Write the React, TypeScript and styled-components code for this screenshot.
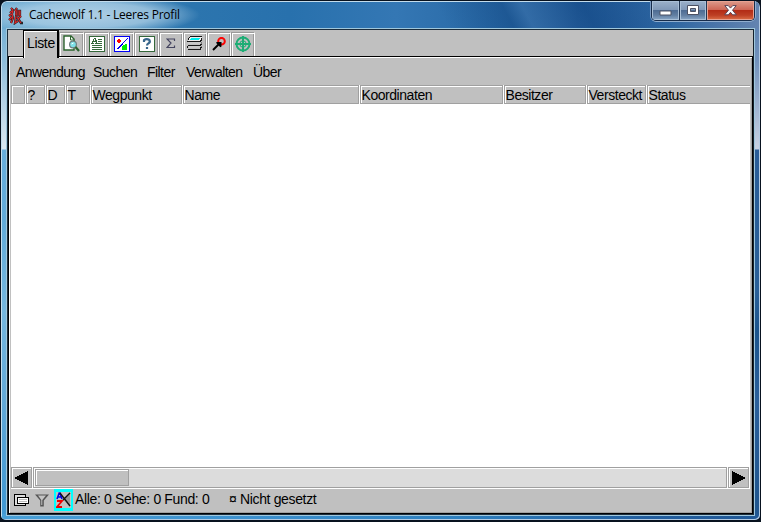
import React from 'react';
import styled, { createGlobalStyle } from 'styled-components';

const Global = createGlobalStyle`
  * { box-sizing: border-box; }
  html, body { margin: 0; padding: 0; overflow: hidden; background: #0a1420; }
`;

const Window = styled.div`
  width: 761px;
  height: 522px;
  display: grid;
  grid-template-rows: 28px 486px 5px;
  border: 1px solid #08121f;
  border-bottom-width: 2px;
  border-radius: 7px 7px 6px 6px;
  font-family: 'Liberation Sans', Arial, sans-serif;
  font-size: 14px;
  color: #000;
  overflow: hidden;
  box-shadow: inset 1px 1px 0 #c3dcec, inset -1px -1px 0 #b4cbe3;
  background:
    linear-gradient(90deg, #48a0d8, #3e92cf 30%, #2e80bf 60%, #235f9f 85%, #205896) 0 100% / 100% 6px no-repeat,
    linear-gradient(180deg, #64a5cf 0, #8dbddb 60px, #b4d2e6 100px, #dce9f2 148px, #68aedc 149px, #62abd9 220px, #75b7df 310px, #62a9d8 400px, #4299d3 500px) 0 0 / 8px 100% no-repeat,
    linear-gradient(180deg, #5179aa 0, #7292bc 60px, #c8d1e2 148px, #295d99 149px, #2a6099 290px, #1b548d 330px, #2b609b 400px, #20568f 500px) 100% 0 / 8px 100% no-repeat;
`;

const TitleBar = styled.header`
  display: flex;
  margin: 1px 1px 0;
  padding-left: 6px;
  border-radius: 5px 5px 0 0;
  background:
    radial-gradient(ellipse 112px 20px at 86px 13px, rgba(190,216,234,.85) 0, rgba(174,207,229,.75) 60%, rgba(130,180,214,0) 100%),
    linear-gradient(62deg, transparent 0 58%, rgba(17,68,127,.4) 66.5%, rgba(65,118,174,.5) 69%, rgba(17,66,126,.35) 77%, transparent 86%),
    linear-gradient(90deg, #6eacd2 0, #569dca 10%, #2c75ae 25%, #2871ad 38%, #3477b4 52%, #2868a5 65%, #1d5795 76%, #2d65a1 88%, #6484b0 100%);
`;

const Title = styled.span`
  font: 12px/26px 'Open Sans', 'Noto Sans', sans-serif;
  letter-spacing: -0.23px;
  margin-left: 5px;
  white-space: pre;
  flex: 1;
`;

const WinButtons = styled.div`
  display: flex;
  width: 104px;
  height: 20px;
  margin-right: 4px;
  margin-top: -1px;
  border: 1px solid #172c4b;
  border-top: 0;
  border-radius: 0 0 5px 5px;
  overflow: hidden;
  box-shadow: 0 1px 0 #91aecf, -1px 0 0 #7b9bc2, 1px 0 0 #91aecf;
`;

const WinButton = styled.div<{ $w: number; $close?: boolean; $low?: boolean }>`
  width: ${p => p.$w}px;
  display: grid;
  place-items: center;
  padding-top: ${p => (p.$low ? 5 : 0)}px;
  border-right: ${p => (p.$close ? 0 : '1px solid #203552')};
  background: ${p => p.$close
    ? 'linear-gradient(#dc9b8c, #ce6857 45%, #b32c16 50%, #bd3f24 75%, #dc7048)'
    : 'linear-gradient(#9bb1ca, #8199b8 45%, #4e6c93 50%, #627fa2 75%, #8ba8c7)'};
  box-shadow: inset 0 0 0 1px ${p => (p.$close ? '#e7a393' : '#a9bfd6')};
`;

const Client = styled.main`
  width: 747px;
  height: 486px;
  margin: 0 0 0 6px;
  display: grid;
  grid-template-rows: 26px 458px;
  border: 1px solid #1b2c3b;
  border-right-color: #14202b;
  background: #c0c0c0;
  box-shadow: 0 0 0 1px #9fc7dc;
`;

const TabStrip = styled.nav`
  display: flex;
  align-items: flex-end;
  padding-left: 15px;
  height: 26px;
`;

const ActiveTab = styled.div`
  position: relative;
  width: 36px;
  height: 28px;
  margin-bottom: -2px;
  border: 1px solid #000;
  border-right-width: 2px;
  border-bottom: 0;
  background: #c0c0c0;
  box-shadow: inset 1px 1px 0 #fff;
  padding-left: 3px;
  line-height: 24px;
  letter-spacing: -0.35px;
  z-index: 1;
`;

const Tab = styled.div<{ $w: number }>`
  width: ${p => p.$w}px;
  height: 24px;
  display: grid;
  place-items: center;
  padding-bottom: 2px;
  border-left: 1px solid #9a9a9a;
  border-top: 1px solid #9a9a9a;
  border-right: 1px solid #fff;
  box-shadow: inset 1px 1px 0 #fff, inset -1px 0 0 #9a9a9a;
  svg { display: block; }
`;

const Panel = styled.section`
  border: 1px solid #000;
  box-shadow: inset 1px 1px 0 #fff, inset -1px -1px 0 #a0a0a0;
  padding: 1px 2px 1px 2px;
  display: grid;
  grid-template-columns: 739px;
  grid-template-rows: 27px 19px 363px 21px 1fr;
`;

const MenuBar = styled.div`
  display: flex;
  padding-left: 5px;
`;

const MenuItem = styled.span<{ $w: number }>`
  width: ${p => p.$w}px;
  line-height: 29px;
  font-size: 14px;
  letter-spacing: -0.55px;
  white-space: nowrap;
`;

const HeaderRow = styled.div`
  display: flex;
  background: #fff;
  overflow: hidden;
`;

const HeaderCell = styled.div<{ $w: number }>`
  width: ${p => p.$w - 1}px;
  margin-right: 1px;
  flex: none;
  border: 1px solid #a0a0a0;
  background: #c0c0c0;
  box-shadow: inset 1px 1px 0 #fff;
  padding-left: 0.5px;
  line-height: 19px;
  font-size: 14px;
  letter-spacing: -0.45px;
  white-space: nowrap;
`;

const TableBody = styled.div`
  background: #fff;
`;

const ScrollBar = styled.div`
  display: grid;
  grid-template-columns: 21px 1fr 21px;
  gap: 1px;
  padding-right: 1px;
  background: #fff;
`;

const Arrow = styled.div`
  border: 1px solid #a0a0a0;
  background: #c0c0c0;
  box-shadow: inset 1px 1px 0 #fff;
  display: grid;
  place-items: center;
`;

const Track = styled.div`
  border: 1px solid #a0a0a0;
  background: #dcdcdc;
  box-shadow: inset 1px 1px 0 #fff;
  padding: 1px;
`;

const Thumb = styled.div`
  width: 94px;
  height: 17px;
  border: 1px solid #a0a0a0;
  background: #c0c0c0;
  box-shadow: inset 1px 1px 0 #fff;
`;

const StatusBar = styled.footer`
  display: flex;
  align-items: flex-start;
  padding: 0 0 0 3px;
  border-top: 1px solid #fff;
  font-size: 14px;
  letter-spacing: -0.35px;
  line-height: 21px;
  white-space: pre;
`;

const IconSlot = styled.span<{ $w: number; $cyan?: boolean }>`
  width: ${p => p.$w}px;
  height: 22px;
  display: grid;
  place-items: center;
  background: ${p => (p.$cyan ? '#00ffff' : 'transparent')};
`;

const StatusText = styled.span<{ $w: number }>`
  width: ${p => p.$w}px;
  margin-left: 2px;
`;

const WolfIcon = () => (
  <svg width="16" height="18" viewBox="0 0 16 18" style={{ marginTop: 5 }} fill="none">
    <path d="M3 1l2 2-3 3M5 4l-1 3-3 2M4 7l1 4-2 5M4 10l-3 3M9 1l-2 3M8 4h4v4H8zM8 6h4M8 9l-1 7 3-2M9 10l4 6M13 9l-3 3M12 16h3" stroke="#24262b" strokeWidth="2.3" />
    <path d="M3 1l2 2-3 3M5 4l-1 3-3 2M4 7l1 4-2 5M4 10l-3 3M9 1l-2 3M8 4h4v4H8zM8 6h4M8 9l-1 7 3-2M9 10l4 6M13 9l-3 3" stroke="#e02828" strokeWidth="1.1" />
  </svg>
);

const DetailIcon = () => (
  <svg width="17" height="17" viewBox="0 0 17 17" fill="none">
    <path d="M1 1h7l3 3v11H1z" fill="#fff" stroke="#2d642f" strokeWidth="1.4" />
    <path d="M7.5 1v4h4" stroke="#2d642f" />
    <circle cx="10" cy="9.5" r="3.4" fill="#7de1e8" stroke="#6f7f80" strokeWidth="1.2" />
    <path d="M12.5 12l3.5 4" stroke="#2d6530" strokeWidth="2.2" />
    <path d="M8.5 9l2-1" stroke="#fff" />
  </svg>
);

const TextIcon = () => (
  <svg width="16" height="16" viewBox="0 0 16 16" shapeRendering="crispEdges" fill="none">
    <path d="M.5.5h15v15H.5z" fill="#fff" stroke="#34683a" />
    <path d="M9 3.5h4M9 5.5h4M9 7.5h4M3 9.5h10M3 11.5h10M3 13.5h10M2 7.5h3M6 7.5h3M3.5 5v2M7.5 4v3M4 4.5h1M5 2.5h2M4.5 3v2M6.5 3v3M4 5.5h3" stroke="#34683a" />
  </svg>
);

const PictureIcon = () => (
  <svg width="16" height="16" viewBox="0 0 16 16" shapeRendering="crispEdges">
    <path d="M.5.5h15v15H.5z" fill="#fff" stroke="#0000f4" />
    <path d="M3 4h1V3h2v1h1v2H6v1H4V6H3z" fill="#f00" />
    <path d="M3 12h1v-1h1v-1h1V9h1V8h1V7h1V6h1V5h1V4h1V3h1V2h1v1h-1v1h-1v1h-1v1h-1v1h-1v1H9v1H8v1H7v1H6v1H5v1H3z" fill="#0000f4" />
    <path d="M8 14v-4h1V9h2V8h2v6z" fill="#00ed00" />
  </svg>
);

const HelpIcon = () => (
  <svg width="16" height="16" viewBox="0 0 16 16" fill="none">
    <path d="M.5.5h15v15H.5z" fill="#fff" stroke="#34683a" shapeRendering="crispEdges" />
    <path d="M5 6V4.2Q7.6 2 10.4 4q1.2 2-.8 3.2Q8 8 8 9.6M8 11v2" stroke="#38668c" strokeWidth="2.2" />
  </svg>
);

const SigmaIcon = () => (
  <svg width="10" height="11" viewBox="0 0 10 11" fill="none">
    <path d="M8.5 3V1H1l4 4-4 4.5h7.5V7.5" stroke="#454560" strokeWidth="1.2" />
  </svg>
);

const PrintIcon = () => (
  <svg width="16" height="15" viewBox="0 0 16 15" shapeRendering="crispEdges">
    <path d="M3 1h12v1h-1v2h-1v1H1V3h1V2h1z" fill="#eee" />
    <path d="M4 2h9v1h-1v1H3V3h1z" fill="#00f0f0" />
    <path d="M3 0h12v1H3zM2 1h1v1H2zM1 2h1v2H1zM0 5h13V4h1V2h1v3h-1v1H0zM1 9h12V8h2v1h-1v1H1zM1 13h12v-2h2v1h-1v2H1zM0 10h1v2H0z" fill="#171717" />
    <path d="M1 6h12v2H1zM2 10h11v2H2z" fill="#c8c8c8" />
    <path d="M14 6h1v2h-1zM14 10h1v1h-1z" fill="#777" />
  </svg>
);

const GotoIcon = () => (
  <svg width="14" height="14" viewBox="0 0 14 14" fill="none">
    <circle cx="9.5" cy="4.2" r="3.3" stroke="#fb0505" strokeWidth="2" />
    <path d="M1 13l7-7" stroke="#000" strokeWidth="2" />
    <path d="M4.5 5h5v4.5l-1.2.8L4.2 6z" fill="#000" />
  </svg>
);

const RadarIcon = () => (
  <svg width="16" height="16" viewBox="0 0 16 16" fill="none" stroke="#1ead75">
    <circle cx="8" cy="8" r="6.5" strokeWidth="2" />
    <circle cx="8" cy="8" r="3.2" strokeWidth="1" />
    <path d="M8 0v16M0 8h16" strokeWidth="2" />
  </svg>
);

const tabs = [
  { w: 25, icon: <DetailIcon /> },
  { w: 25, icon: <TextIcon /> },
  { w: 25, icon: <PictureIcon /> },
  { w: 25, icon: <HelpIcon /> },
  { w: 24, icon: <SigmaIcon /> },
  { w: 24, icon: <PrintIcon /> },
  { w: 24, icon: <GotoIcon /> },
  { w: 24, icon: <RadarIcon /> },
];

const menus: [string, number][] = [['Anwendung', 77], ['Suchen', 54], ['Filter', 39], ['Verwalten', 67], ['Über', 40]];

const columns: [string, number][] = [
  ['', 15], ['?', 20], ['D', 20], ['T', 25], ['Wegpunkt', 92], ['Name', 177],
  ['Koordinaten', 144], ['Besitzer', 83], ['Versteckt', 60], ['Status', 106],
];

export default function App() {
  return (
    <>
      <Global />
      <Window>
        <TitleBar>
          <WolfIcon />
          <Title>Cachewolf 1.1 - Leeres Profil</Title>
          <WinButtons>
            <WinButton $w={29} $low>
              <svg width="13" height="6" viewBox="0 0 13 6"><path d="M1 1h11v4H1z" fill="#fff" stroke="#4c5264" /></svg>
            </WinButton>
            <WinButton $w={27}>
              <svg width="12" height="11" viewBox="0 0 12 11"><path d="M.5.5h11v9H.5zM3.5 3.5v3h5v-3z" fill="#fff" fillRule="evenodd" stroke="#4c5264" /></svg>
            </WinButton>
            <WinButton $w={48} $close>
              <svg width="13" height="11" viewBox="0 0 13 11"><path d="M.8.6h3.5l2.2 2.5L8.7.6h3.5L8.5 5.2l3.8 4.6H8.7L6.5 7.3 4.3 9.8H.7l3.8-4.6z" fill="#fff" stroke="#594557" /></svg>
            </WinButton>
          </WinButtons>
        </TitleBar>
        <Client>
          <TabStrip>
            <ActiveTab>Liste</ActiveTab>
            {tabs.map((t, i) => <Tab key={i} $w={t.w}>{t.icon}</Tab>)}
          </TabStrip>
          <Panel>
            <MenuBar>
              {menus.map(([label, w]) => <MenuItem key={label} $w={w}>{label}</MenuItem>)}
            </MenuBar>
            <HeaderRow>
              {columns.map(([label, w], i) => <HeaderCell key={i} $w={w}>{label}</HeaderCell>)}
            </HeaderRow>
            <TableBody />
            <ScrollBar>
              <Arrow><svg width="15" height="14" viewBox="0 0 15 14" shapeRendering="crispEdges"><path d="M0 7L14 0v14z" /></svg></Arrow>
              <Track><Thumb /></Track>
              <Arrow><svg width="15" height="14" viewBox="0 0 15 14" shapeRendering="crispEdges"><path d="M15 7L1 0v14z" /></svg></Arrow>
            </ScrollBar>
            <StatusBar>
              <IconSlot $w={15}>
                <svg width="15" height="13" viewBox="0 0 15 13" shapeRendering="crispEdges" fill="none">
                  <path d="M.5.5h11v11H.5z" fill="#ddd" stroke="#000" />
                  <path d="M3.5 3.5h11v6h-11z" fill="#fff" stroke="#000" />
                  <path d="M5 5.5h8M5 7.5h8" stroke="#bbb" />
                </svg>
              </IconSlot>
              <IconSlot $w={25}>
                <svg width="14" height="13" viewBox="0 0 14 13"><path d="M0 .5h14L8.8 6.5v6H5.2v-6z" fill="#555" /><path d="M3 1.5h8L7.3 6v5h-1V6z" fill="#c4c4c4" /></svg>
              </IconSlot>
              <IconSlot $w={19} $cyan>
                <svg width="15" height="16" viewBox="0 0 15 16" fill="none">
                  <path d="M0 0h15v16H0z" fill="#c0c0c0" />
                  <path d="M1 7l2.2-6H4l2 6M2 5h4" stroke="#0000e8" strokeWidth="1.6" />
                  <path d="M1 9h5l-5 6h5" stroke="#f00000" strokeWidth="1.8" />
                  <path d="M7 7l7-7v15z" fill="#999" />
                  <path d="M4 1l10 13M14 1L7 8" stroke="#111" strokeWidth="1.3" />
                </svg>
              </IconSlot>
              <StatusText $w={152}>Alle: 0 Sehe: 0 Fund: 0</StatusText>
              <StatusText $w={100}>¤ Nicht gesetzt</StatusText>
            </StatusBar>
          </Panel>
        </Client>
      </Window>
    </>
  );
}
